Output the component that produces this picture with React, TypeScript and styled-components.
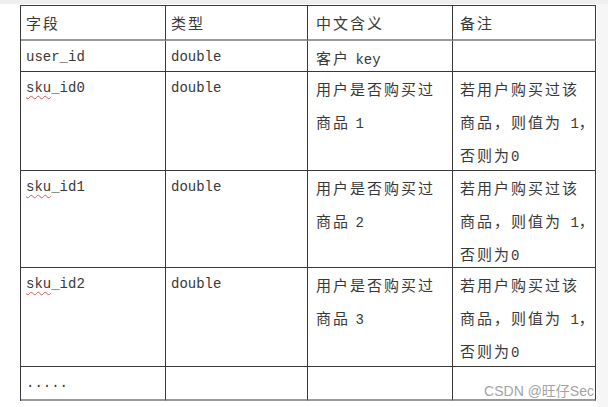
import React from "react";
import styled, { createGlobalStyle } from "styled-components";

const Global = createGlobalStyle`
  html, body { margin: 0; padding: 0; background: #ffffff; }
  body { width: 608px; height: 407px; overflow: hidden; }
`;

const Page = styled.div`
  position: relative;
  width: 608px;
  height: 407px;
  box-sizing: border-box;
  border-top: 4px solid #efefef;
  padding: 1px 0 0 20px;
  background: linear-gradient(to right, #ffffff 597px, #f6f6f6 597px);
`;

const Grid = styled.div`
  display: grid;
  grid-template-columns: 145px 142px 145px 143px;
  grid-template-rows: 35px 31px 99px 97px 99px 34px;
  width: 576px;
  box-sizing: border-box;
  border-left: 1px solid #3a3a3a;
  border-top: 1px solid #3a3a3a;
  background: #ffffff;
  color: #383838;
`;

const Cell = styled.div<{ $pad: number; $head?: boolean; $last?: boolean; $cjk?: boolean }>`
  box-sizing: border-box;
  border-right: 1px solid #3a3a3a;
  border-bottom: ${(p) => (p.$head || p.$last ? "2px solid #999999" : "1px solid #3a3a3a")};
  padding-left: ${(p) => p.$pad}px;
  line-height: 33px;
  white-space: nowrap;
  font-family: ${(p) =>
    p.$cjk ? `"Noto Sans CJK SC", sans-serif` : `"Liberation Mono", "Noto Sans CJK SC", monospace`};
  font-size: ${(p) => (p.$cjk ? "15px" : "14px")};
  letter-spacing: ${(p) => (p.$cjk ? "2px" : "0")};
  overflow: hidden;
`;

const Line = styled.div`
  height: 33px;
`;

const Lat = styled.span`
  font-family: "Liberation Mono", monospace;
  font-size: 14px;
  letter-spacing: 0;
`;

const Spell = styled.span`
  text-decoration: underline wavy #e25a5a;
  text-decoration-thickness: 1px;
  text-underline-offset: 3px;
`;

const Watermark = styled.div`
  position: absolute;
  right: 14px;
  bottom: 8px;
  font-family: "Liberation Sans", "Noto Sans CJK SC", sans-serif;
  font-size: 14px;
  line-height: 16px;
  color: #a3a3a3;
  white-space: nowrap;
`;

const pads = [5, 5, 8, 7];

type Row = { field: React.ReactNode; type: string; meaning: React.ReactNode[]; note: React.ReactNode[] };

const remark = [
  "若用户购买过该",
  <>商品，则值为<Lat> 1</Lat>，</>,
  <>否则为<Lat>0</Lat></>,
];

const rows: Row[] = [
  { field: "user_id", type: "double", meaning: [<>客户 <Lat>key</Lat></>], note: [] },
  ...[0, 1, 2].map((i) => ({
    field: (
      <>
        <Spell>sku</Spell>_id{i}
      </>
    ),
    type: "double",
    meaning: ["用户是否购买过", <>商品 <Lat>{i + 1}</Lat></>],
    note: remark,
  })),
];

export default function App() {
  return (
    <>
      <Global />
      <Page>
        <Grid>
          {["字段", "类型", "中文含义", "备注"].map((h, i) => (
            <Cell key={h} $pad={pads[i]} $head $cjk>
              {h}
            </Cell>
          ))}
          {rows.map((r, ri) => (
            <React.Fragment key={ri}>
              <Cell $pad={pads[0]}>{r.field}</Cell>
              <Cell $pad={pads[1]}>{r.type}</Cell>
              <Cell $pad={pads[2]} $cjk>
                {r.meaning.map((m, k) => (
                  <Line key={k}>{m}</Line>
                ))}
              </Cell>
              <Cell $pad={pads[3]} $cjk>
                {r.note.map((m, k) => (
                  <Line key={k}>{m}</Line>
                ))}
              </Cell>
            </React.Fragment>
          ))}
          <Cell $pad={pads[0]} $last>.....</Cell>
          <Cell $pad={pads[1]} $last />
          <Cell $pad={pads[2]} $last $cjk />
          <Cell $pad={pads[3]} $last $cjk />
        </Grid>
        <Watermark>CSDN @旺仔Sec</Watermark>
      </Page>
    </>
  );
}
